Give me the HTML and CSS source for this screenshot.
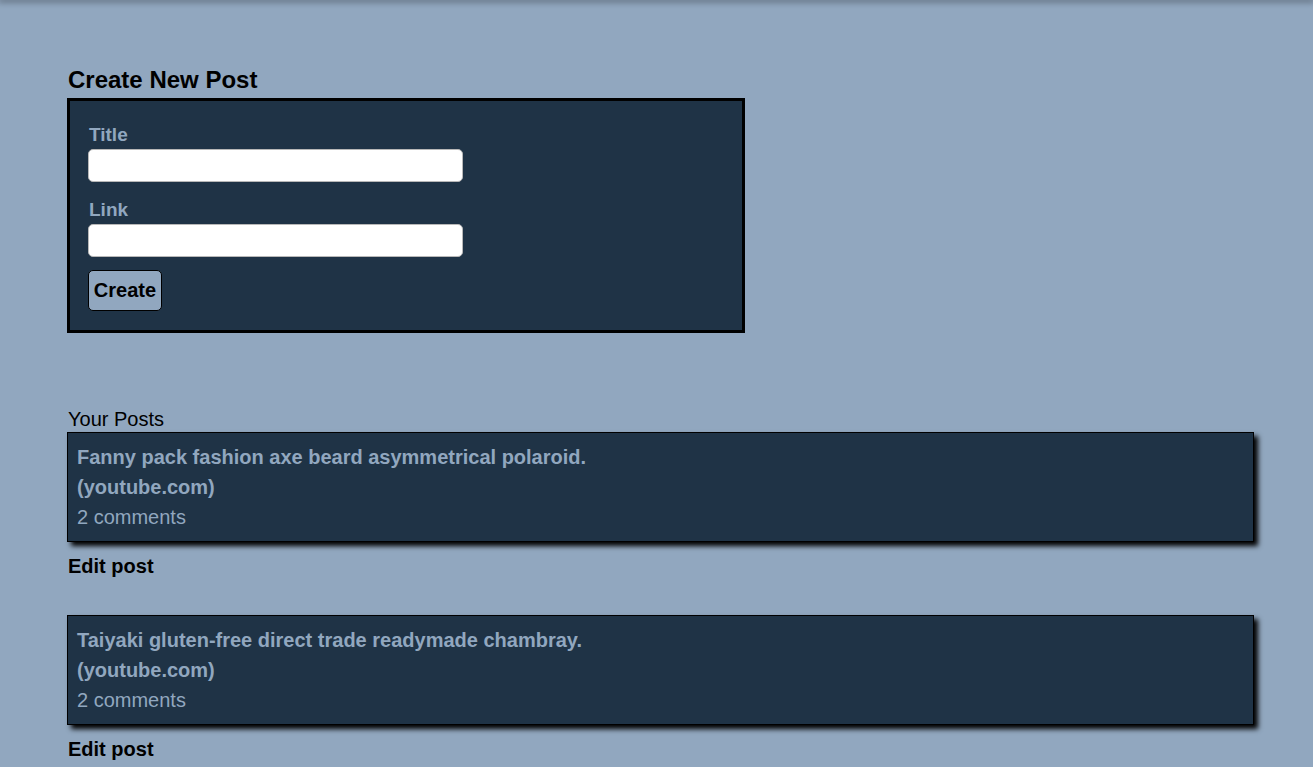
FILE: index.html
```html
<!DOCTYPE html>
<html>
<head>
<meta charset="utf-8">
<link rel="stylesheet" href="styles.css">
</head>
<body>
<div class="topshade"></div>
<main class="page">
  <section class="create">
    <h2 class="create-title">Create New Post</h2>
    <form class="create-form">
      <label class="field-label">Title</label>
      <input class="field-input" type="text">
      <label class="field-label">Link</label>
      <input class="field-input" type="text">
      <button class="create-btn" type="button">Create</button>
    </form>
  </section>
  <section class="posts">
    <div class="posts-title">Your Posts</div>
    <div class="post">
      <div class="post-card">
        <div class="post-line bold">Fanny pack fashion axe beard asymmetrical polaroid.</div>
        <div class="post-line bold">(youtube.com)</div>
        <div class="post-line">2 comments</div>
      </div>
      <a class="edit-link">Edit post</a>
    </div>
    <div class="post">
      <div class="post-card">
        <div class="post-line bold">Taiyaki gluten-free direct trade readymade chambray.</div>
        <div class="post-line bold">(youtube.com)</div>
        <div class="post-line">2 comments</div>
      </div>
      <a class="edit-link">Edit post</a>
    </div>
  </section>
</main>
</body>
</html>
```
FILE: styles.css
```css
html, body {
  margin: 0;
  padding: 0;
  background: #91a7bf;
  font-family: "Liberation Sans", Arial, sans-serif;
  color: #000;
}
.topshade {
  height: 0;
  box-shadow: 0 0 6px 2px rgba(0,0,0,0.4);
}
.page {
  padding: 0 59px 0 67px;
}
.create {
  padding-top: 66px;
}
.create-title {
  margin: 0;
  font-size: 24px;
  line-height: 28px;
  font-weight: bold;
  padding-left: 1px;
}
.create-form {
  width: 654px;
  border: 3px solid #000;
  background: #1f3346;
  padding: 21px 0 19px 18px;
  box-sizing: content-box;
  display: flex;
  flex-direction: column;
  align-items: flex-start;
  margin-top: 4px;
}
.field-label {
  color: #91a7bf;
  font-weight: bold;
  font-size: 19px;
  line-height: 26px;
  margin-bottom: 1px;
  padding-left: 1px;
}
.field-input {
  width: 375px;
  height: 33px;
  box-sizing: border-box;
  border: 1px solid #b8b8b8;
  border-radius: 5px;
  background: #fff;
  margin: 0 0 15px 0;
  padding: 0 6px;
}
.create-btn {
  width: 74px;
  height: 41px;
  margin-top: -2px;
  background: #91a7bf;
  border: 1px solid #000;
  border-radius: 5px;
  font-family: "Liberation Sans", Arial, sans-serif;
  font-weight: bold;
  font-size: 20px;
  color: #000;
  padding: 0;
}
.posts {
  margin-top: 75px;
}
.posts-title {
  font-size: 20px;
  line-height: 22px;
  padding-left: 1px;
  margin-bottom: 2px;
}
.post {
  display: flex;
  flex-direction: column;
  align-items: flex-start;
  margin-bottom: 38px;
}
.post-card {
  align-self: stretch;
  border: 1px solid #000;
  background: #1f3346;
  padding: 9px;
  box-shadow: 4px 4px 5px #000;
}
.post-line {
  color: #91a7bf;
  font-size: 20px;
  line-height: 30px;
}
.bold {
  font-weight: bold;
}
.edit-link {
  font-weight: bold;
  font-size: 20px;
  line-height: 22px;
  margin-top: 13px;
  padding-left: 1px;
  color: #000;
}
```
